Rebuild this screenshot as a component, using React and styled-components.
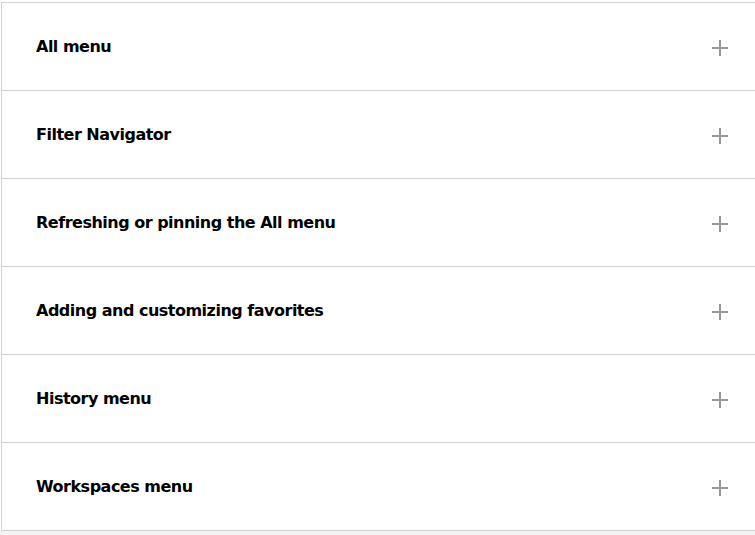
import React from "react";
import styled, { createGlobalStyle } from "styled-components";

const Global = createGlobalStyle`
  html, body { margin: 0; padding: 0; background: #ffffff; }
  #root { min-height: 100vh; display: flex; flex-direction: column; }
`;

const Page = styled.div`
  display: flex;
  flex-direction: column;
  padding: 2px 0 0 1px;
  background: #ffffff;
`;

const List = styled.div`
  border: 1px solid #d2d2d2;
  border-right: none;
  background: #ffffff;
`;

const Row = styled.div`
  height: 87px;
  display: flex;
  align-items: center;
  justify-content: space-between;
  padding: 0 27px 0 34px;
  border-top: ${(p) => (p.$first ? "none" : "1px solid #d2d2d2")};
  font-family: "DejaVu Sans", "Liberation Sans", sans-serif;
  cursor: pointer;
`;

const Title = styled.span`
  font-size: 16px;
  font-weight: 700;
  letter-spacing: -0.5px;
  color: #000000;
  margin-top: -1px;
`;

const Plus = styled.svg`
  width: 16px;
  height: 16px;
  margin-top: 3px;
  flex: none;
`;

const Filler = styled.div`
  flex: 1;
  background: #f4f4f4;
`;

const items = [
  "All menu",
  "Filter Navigator",
  "Refreshing or pinning the All menu",
  "Adding and customizing favorites",
  "History menu",
  "Workspaces menu",
];

export default function App() {
  return (
    <>
      <Global />
      <Page>
        <List>
          {items.map((t, i) => (
            <Row key={t} $first={i === 0}>
              <Title>{t}</Title>
              <Plus viewBox="0 0 16 16">
                <path d="M8 0V16M0 8H16" stroke="#999999" strokeWidth="2" />
              </Plus>
            </Row>
          ))}
        </List>
      </Page>
      <Filler />
    </>
  );
}
